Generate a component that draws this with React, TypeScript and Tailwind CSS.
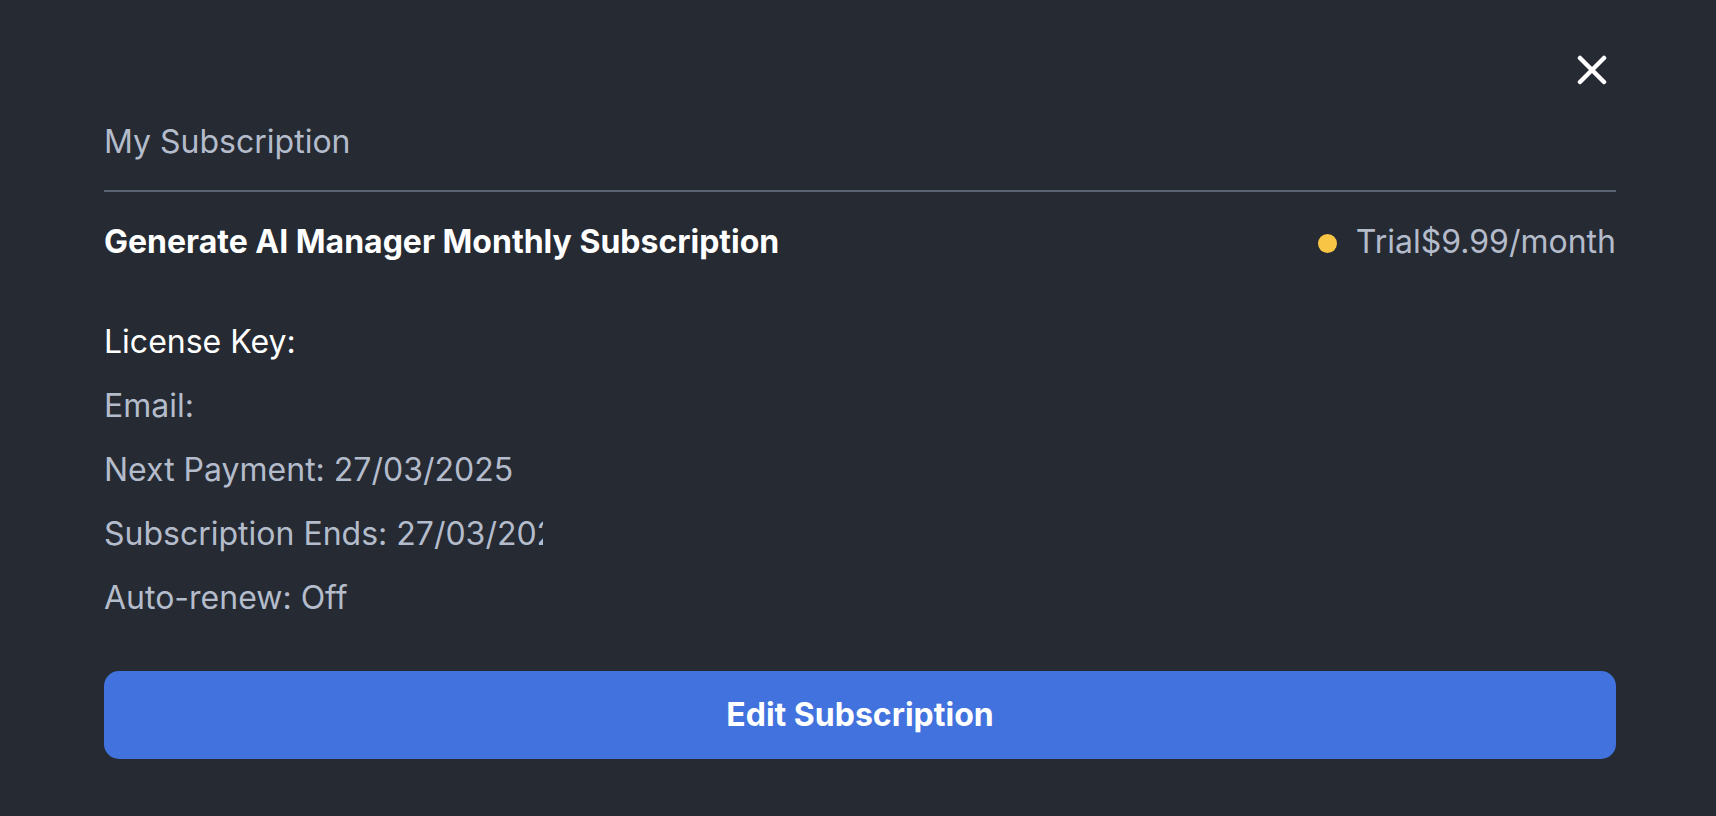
import React from "react";

type Detail = { label: string; value?: string; strong?: boolean };

const details: Detail[] = [
    { label: "License Key:", strong: true },
    { label: "Email:" },
    { label: "Next Payment:", value: "27/03/2025" },
    { label: "Subscription Ends:", value: "27/03/2025" },
    { label: "Auto-renew:", value: "Off" },
];

function CloseIcon() {
    return (
        <svg width="30" height="30" viewBox="0 0 30 30" fill="none" stroke="currentColor" strokeWidth="4.5" strokeLinecap="round">
            <line x1="3" y1="3" x2="27" y2="27" />
            <line x1="27" y1="3" x2="3" y2="27" />
        </svg>
    );
}

export default function App() {
    return (
        <div className="min-h-screen w-full bg-[#252a33] font-['Inter',sans-serif] text-[32px] leading-[48px]">
            <div className="flex justify-end pr-[109px] pt-[55px]">
                <button type="button" className="h-[30px] w-[30px] cursor-pointer text-white">
                    <CloseIcon />
                </button>
            </div>

            <div className="pl-[104px] pr-[100px]">
                <h2 className="mt-[33px] text-[#b4bccb]">My Subscription</h2>
                <div className="mt-[24px] h-[2px] w-full bg-[#5b6271]" />

                <div className="mt-[26px] flex items-center justify-between">
                    <h3 className="font-bold text-white">Generate AI Manager Monthly Subscription</h3>
                    <div className="flex items-center text-[#b4bccb]">
                        <span className="mr-[19px] mt-[2px] h-[19px] w-[19px] rounded-full bg-[#f8c544]" />
                        <span>Trial</span>
                        <span>$9.99/month</span>
                    </div>
                </div>

                {/* details column is fixed-width, long values get clipped */}
                <div className="mt-[52px] flex w-[439px] flex-col gap-[16px] overflow-hidden whitespace-nowrap">
                    {details.map(d => (
                        <div key={d.label} className={d.strong ? "text-white" : "text-[#b4bccb]"}>
                            {d.label}
                            {d.value ? ` ${d.value}` : ""}
                        </div>
                    ))}
                </div>

                <button
                    type="button"
                    className="mt-[49px] h-[88px] w-full cursor-pointer rounded-[15px] bg-[#4172dd] font-bold text-white">
                    Edit Subscription
                </button>
            </div>
        </div>
    );
}
